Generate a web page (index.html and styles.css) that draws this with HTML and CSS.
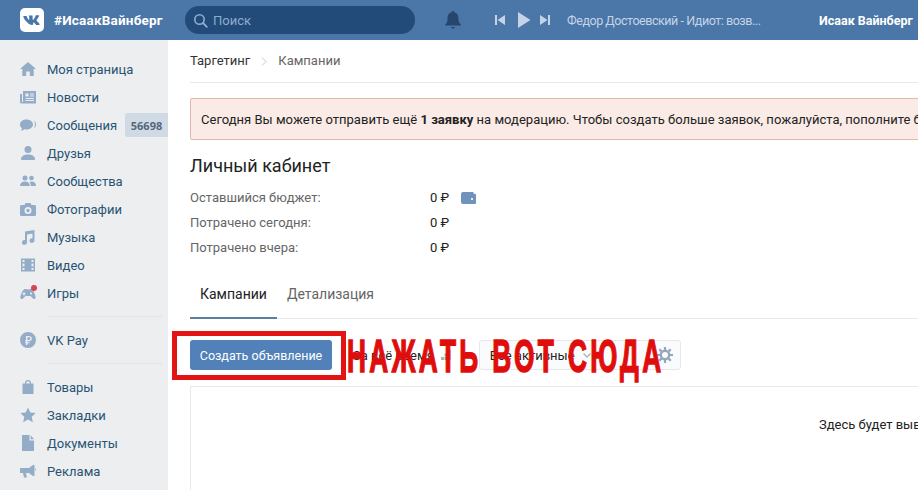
FILE: index.html
```html
<!DOCTYPE html>
<html lang="ru">
<head>
<meta charset="utf-8">
<title>Таргетинг</title>
<link rel="stylesheet" href="styles.css">
</head>
<body>
<header class="topbar">
  <div class="brand">
    <span class="logo"><svg width="24" height="24" viewBox="0 0 24 24"><rect width="24" height="24" rx="5" fill="#fff"/><path d="M3.600 7.900h2.600c.2 0 .4.100.5.400.7 2 1.700 3.600 2.200 3.600.2 0 .3-.1.3-.6V8.900c-.1-.8-.5-.8-.5-1.100 0-.1.100-.2.300-.2h3.200c.3 0 .4.100.4.400v3.300c0 .3.100.5.200.5.400 0 1-.6 1.800-1.900.5-.9.900-1.800 1.100-2.300.1-.2.200-.3.500-.3h2.500c.5 0 .6.200.5.500-.3 1-2.500 4.100-2.500 4.100-.2.300-.3.500 0 .8.200.3 1 1 1.500 1.600.7.800 1.200 1.500 1.400 2 .1.400-.1.600-.5.600h-2.500c-.5 0-.7-.3-1.500-1.200-.7-.7-1.200-1.200-1.500-1.200-.3 0-.4.100-.4.500v1.300c0 .4-.1.600-1 .6-2.100 0-4.100-1.200-5.700-3.400C4.600 12.100 3.300 9.500 3.300 8.300c0-.2.100-.4.300-.4z" fill="#4a76a8"/></svg></span>
    <span class="brand-name">#ИсаакВайнберг</span>
  </div>
  <div class="search">
    <svg class="search-icon" width="15" height="15" viewBox="0 0 15 15"><circle cx="6.500" cy="6.500" r="4.700" fill="none" stroke="#8fadcf" stroke-width="1.600"/><path d="M10 10l3.800 3.800" stroke="#8fadcf" stroke-width="1.800" stroke-linecap="round"/></svg>
    <span class="search-text">Поиск</span>
  </div>
  <svg class="bell" width="18" height="20" viewBox="0 0 18 20"><path d="M9 1c-.8 0-1.300.6-1.300 1.300C5 3 3.600 5.200 3.600 8c0 3-.6 5-2.100 6.200-.5.400-.4 1.300.4 1.300h14.400c.8 0 .9-.9.4-1.300C15 13 14.400 11 14.400 8c0-2.800-1.400-5-4.100-5.700C10.300 1.600 9.800 1 9 1z" fill="#24466f"/><path d="M7 17h4a2 1.500 0 0 1-4 0z" fill="#24466f"/></svg>
  <div class="player">
    <svg width="10" height="10" viewBox="0 0 10 10"><path d="M0 0h2v10H0zM10 0v10L2.500 5z" fill="#c5d3e6"/></svg>
    <svg class="play" width="13" height="16" viewBox="0 0 13 16"><path d="M0 0l12.500 8L0 16z" fill="#c5d3e6"/></svg>
    <svg width="10" height="10" viewBox="0 0 10 10"><path d="M0 0l7.500 5L0 10zM8 0h2v10H8z" fill="#c5d3e6"/></svg>
    <span class="track">Федор Достоевский - Идиот: возв...</span>
  </div>
  <span class="user">Исаак Вайнберг</span>
</header>

<div class="page">
  <nav class="sidebar">
    <a class="nav-item"><svg class="nav-icon" viewBox="0 0 16 16"><path d="M8 1l8 7h-2.300v7H9.800v-4.500H6.200V15H2.300V8H0z"/></svg><span>Моя страница</span></a>
    <a class="nav-item"><svg class="nav-icon" viewBox="0 0 16 16"><path fill-rule="evenodd" d="M3 2h13v12.500H1.500A1.500 1.500 0 0 1 0 13V5h2v8h1zM5.500 4.500v3h3v-3zm4.500 0v1h4v-1zm0 2v1h4v-1zM5.500 9v1H14V9zm0 2v1H14v-1z"/></svg><span>Новости</span></a>
    <a class="nav-item has-badge"><svg class="nav-icon" viewBox="0 0 16 16"><path d="M6.500 2.500C3 2.500 0 4.500 0 7.500c0 1.600.8 2.900 2 3.800-.2 1-.8 1.800-1.300 2.200 1.400 0 2.800-.6 3.700-1.300.7.200 1.400.3 2.100.3 3.600 0 6.500-2.200 6.500-5s-2.900-5-6.500-5z"/><path d="M14 3.500c1.300 1 2 2.400 2 4s-.8 3.200-2.300 4.200c.9-1.200 1.300-2.700 1.300-4.200s-.3-2.900-1-4z"/></svg><span>Сообщения</span><b class="badge">56698</b></a>
    <a class="nav-item"><svg class="nav-icon" viewBox="0 0 16 16"><circle cx="8" cy="4.500" r="3.500"/><path d="M2 15c-.7 0-1-.4-1-1 0-2.500 3-4.500 7-4.500s7 2 7 4.500c0 .6-.3 1-1 1z"/></svg><span>Друзья</span></a>
    <a class="nav-item"><svg class="nav-icon" viewBox="0 0 16 16"><circle cx="5" cy="5" r="2.500"/><circle cx="11.500" cy="5" r="2.300"/><path d="M0 13c0-2.800 2-4.500 5-4.500s4.800 1.700 4.800 4.500zM10.800 13c0-1.800-.5-3-1.400-3.900.6-.4 1.400-.6 2.200-.6 2.700 0 4.400 1.700 4.400 4.500z"/></svg><span>Сообщества</span></a>
    <a class="nav-item"><svg class="nav-icon" viewBox="0 0 16 16"><path fill-rule="evenodd" d="M5.500 2h5l1 2H14.500A1.500 1.500 0 0 1 16 5.500v8a1.500 1.500 0 0 1-1.500 1.500h-13A1.500 1.500 0 0 1 0 13.500v-8A1.500 1.500 0 0 1 1.500 4h3zM8 6a3.500 3.500 0 1 0 0 7 3.500 3.500 0 0 0 0-7zm0 1.800a1.700 1.700 0 1 1 0 3.400 1.700 1.700 0 0 1 0-3.400z"/></svg><span>Фотографии</span></a>
    <a class="nav-item"><svg class="nav-icon" viewBox="0 0 16 16"><path d="M5 2.500L14.500 1v10.500a2.500 2.300 0 1 1-2-2.200V4.500L7 5.400v8a2.500 2.300 0 1 1-2-2.200z"/></svg><span>Музыка</span></a>
    <a class="nav-item"><svg class="nav-icon" viewBox="0 0 16 16"><path fill-rule="evenodd" d="M1 1.500h14v13H1zM2.500 3v2h2V3zm0 3.500v3h2v-3zm0 4.500v2h2v-2zM11.500 3v2h2V3zm0 3.500v3h2v-3zm0 4.500v2h2v-2z"/></svg><span>Видео</span></a>
    <a class="nav-item games"><svg class="nav-icon" viewBox="0 0 16 16"><path fill-rule="evenodd" d="M4 4.500c1.300-.8 2.600-.2 4 .1 1.400-.3 2.700-.9 4-.1 2 1.200 4 7 3.600 8.500-.3 1.300-1.600 1.300-2.600.4L10.500 11h-5L3 13.400c-1 .9-2.300.9-2.600-.4C0 11.500 2 5.700 4 4.500zM3.500 7v1.200H2.400v1h1.100v1.200h1V9.200h1.100v-1H4.500V7zm7.500.5a1 1 0 1 0 0 2 1 1 0 0 0 0-2z"/></svg><i class="dot"></i><span>Игры</span></a>
    <div class="nav-sep"></div>
    <a class="nav-item"><svg class="nav-icon" viewBox="0 0 16 16"><path fill-rule="evenodd" d="M8 0a8 8 0 1 1 0 16A8 8 0 0 1 8 0zM6 4v4.300H5v1h1v1H5v1h1V13h1.400v-1.700h2.100v-1H7.400v-1h1.400c1.900 0 3-1 3-2.700S10.700 4 8.800 4zm1.400 1.200h1.400c1 0 1.600.5 1.600 1.400s-.6 1.500-1.600 1.500H7.400z"/></svg><span>VK Pay</span></a>
    <div class="nav-sep"></div>
    <a class="nav-item"><svg class="nav-icon" viewBox="0 0 16 16"><path fill-rule="evenodd" d="M5 4.500V4a3 3 0 0 1 6 0v.5h2.500V15H2.500V4.500zM6.200 4.500h3.600V4a1.800 1.800 0 0 0-3.600 0z"/></svg><span>Товары</span></a>
    <a class="nav-item"><svg class="nav-icon" viewBox="0 0 16 16"><path d="M8 .5l2.300 5 5.400.6-4 3.700 1.100 5.400L8 12.500l-4.800 2.700 1.100-5.400-4-3.700 5.400-.6z"/></svg><span>Закладки</span></a>
    <a class="nav-item"><svg class="nav-icon" viewBox="0 0 16 16"><path d="M2 0h7.500v5.500H14V16H2zM10.700.3L14 4.300h-3.300z"/></svg><span>Документы</span></a>
    <a class="nav-item"><svg class="nav-icon" viewBox="0 0 16 16"><path d="M0 5h9l4-3h1.500v11H13L9 10H6l.8 4.500H4L3 10H0zM15.500 5H16v3h-.5z"/></svg><span>Реклама</span></a>
  </nav>

  <main class="content">
    <div class="crumbs">
      <span class="crumb-first">Таргетинг</span>
      <svg class="crumb-sep" width="6" height="9" viewBox="0 0 6 9"><path d="M1 .5l4 4-4 4" fill="none" stroke="#c3c8ce" stroke-width="1"/></svg>
      <span class="crumb-last">Кампании</span>
    </div>
    <div class="notice"><span class="notice-text">Сегодня Вы можете отправить ещё <b>1 заявку</b> на модерацию. Чтобы создать больше заявок, пожалуйста, пополните бюджет.</span></div>
    <h1 class="title">Личный кабинет</h1>
    <div class="stat"><span class="stat-label">Оставшийся бюджет:</span><span class="stat-value">0 ₽</span><svg class="wallet" width="15" height="12" viewBox="0 0 15 12"><path fill-rule="evenodd" d="M2 0h10.500v1.800H14a1 1 0 0 1 1 1V11a1 1 0 0 1-1 1H2a2 2 0 0 1-2-2V2a2 2 0 0 1 2-2zm9 6a1 1 0 1 0 0 2.200A1 1 0 0 0 11 6z" fill="#6f93bb"/></svg></div>
    <div class="stat"><span class="stat-label">Потрачено сегодня:</span><span class="stat-value">0 ₽</span></div>
    <div class="stat"><span class="stat-label">Потрачено вчера:</span><span class="stat-value">0 ₽</span></div>
    <div class="tabs">
      <span class="tab tab-active">Кампании</span>
      <span class="tab">Детализация</span>
    </div>
    <div class="toolbar">
      <button class="create">Создать объявление</button>
      <span class="period">За всё время</span>
      <svg class="grid-icon" width="10" height="10" viewBox="0 0 10 10"><path d="M7 0h3v3H7zM3.500 3.500h3v3h-3zM7 3.500h3v3H7zM0 7h3v3H0zM3.500 7h3v3h-3zM7 7h3v3H7z" fill="#a5b4c5"/></svg>
      <div class="filter">
        <span class="filter-text">Все активные</span>
        <svg class="caret" width="8" height="5" viewBox="0 0 8 5"><path d="M.5.500L4 4 7.500.500" fill="none" stroke="#a5b4c5" stroke-width="1.300"/></svg>
        <span class="filter-spacer"></span>
        <svg class="gear" width="16" height="16" viewBox="0 0 16 16"><circle cx="8" cy="8" r="4.200" fill="none" stroke="#93a6ba" stroke-width="2.400"/><path d="M8 0v3M8 13v3M0 8h3M13 8h3M2.300 2.300l2.100 2.100M11.600 11.600l2.100 2.100M13.700 2.300l-2.100 2.100M4.400 11.600l-2.100 2.100" stroke="#93a6ba" stroke-width="2.200"/></svg>
      </div>
    </div>
    <section class="panel"><p class="panel-text">Здесь будет выводиться список Ваших кампаний.</p></section>
    <div class="annot-box"></div>
    <div class="annot-text">НАЖАТЬ ВОТ СЮДА</div>
  </main>
</div>
</body>
</html>
```

FILE: styles.css
```css
* { box-sizing: border-box; }
html, body { margin: 0; height: 490px; overflow: hidden; }
body { font-family: Roboto, "Noto Sans", sans-serif; font-size: 13px; color: #222; background: #fff; }

.topbar { height: 40px; background: #4a76a8; display: flex; align-items: center; padding-left: 20px; white-space: nowrap; overflow: hidden; }
.brand { display: flex; align-items: center; gap: 10px; width: 165px; }
.logo { display: flex; width: 24px; height: 24px; }
.brand-name { color: #fff; font-weight: 700; font-size: 13.500px; letter-spacing: .2px; }
.search { width: 230px; height: 28px; border-radius: 14px; background: #224b7a; display: flex; align-items: center; padding-left: 8px; gap: 5px; }
.search-text { color: #8fadcf; font-size: 13px; }
.bell { margin-left: 29px; flex: none; }
.player { display: flex; align-items: center; margin-left: 33px; width: 324px; }
.player svg { flex: none; }
.play { margin: 0 9px 0 13px; }
.track { color: #c5d3e6; font-size: 12.500px; margin-left: 17px; letter-spacing: -.45px; }
.user { color: #fff; font-weight: 700; font-size: 12.500px; }

.page { display: flex; height: 450px; }
.sidebar { width: 168px; flex: none; background: #edeef0; padding-top: 15px; }
.nav-item { display: flex; align-items: center; height: 28px; padding-left: 20px; color: #285473; font-size: 13px; position: relative; }
.nav-icon { width: 16px; height: 16px; fill: #93acc8; margin-right: 11px; flex: none; }
.badge { margin-left: auto; width: 43px; height: 24px; background: #d0dae5; border-radius: 2px 0 0 2px; color: #55677d; font-size: 11px; font-weight: 700; display: flex; align-items: center; justify-content: center; font-family: "Open Sans", Roboto, sans-serif; }
.dot { position: absolute; left: 31px; top: 6px; width: 6px; height: 6px; border-radius: 50%; background: #d9434e; }
.nav-sep { height: 1px; background: #e1e3e6; margin: 9px 6px 9px 47px; }

.content { flex: 1; min-width: 0; padding-left: 22px; position: relative; white-space: nowrap; overflow: hidden; }
.crumbs { height: 43px; border-bottom: 1px solid #e7e8ec; display: flex; align-items: center; padding-bottom: 2px; }
.crumb-first { color: #333; }
.crumb-sep { margin: 3px 11px 0 11px; }
.crumb-last { color: #656565; }
.notice { margin-top: 15px; width: 760px; height: 42px; background: #faebe6; border: 1px solid #e0b8ad; border-radius: 2px; padding-left: 10px; display: flex; align-items: center; color: #222; letter-spacing: .015px; }
.notice b { font-weight: 700; }
.title { margin: 15px 0 8px; font-size: 18px; font-weight: 400; line-height: 22px; color: #222; }
.stat { display: flex; align-items: center; height: 25px; }
.stat-label { width: 240px; color: #656565; }
.stat-value { color: #222; }
.wallet { margin-left: 12px; }
.tabs { display: flex; height: 49px; margin-top: 10px; border-bottom: 1px solid #e7e8ec; }
.tab { padding: 16px 10px 0; color: #656565; font-size: 14px; height: 49px; }
.tab-active { color: #222; border-bottom: 2px solid #5b7f9e; }
.toolbar { display: flex; align-items: center; height: 32px; margin-top: 20px; }
.create { height: 30px; width: 142px; background: #5181b8; border: 0; border-radius: 3px; color: #fff; font: 12.500px Roboto, sans-serif; padding: 0; }
.period { margin-left: 21px; color: #222; }
.grid-icon { margin-left: 7px; }
.filter { margin-left: 28px; width: 202px; height: 30px; border: 1px solid #e7e8ec; border-radius: 3px; background: #fafbfc; display: flex; align-items: center; padding-left: 10px; }
.filter-text { color: #222; }
.caret { margin-left: 8px; }
.filter-spacer { flex: 1; }
.gear { margin-right: 7px; }
.panel { margin-top: 15px; height: 140px; width: 760px; border: 1px solid #e7e8ec; }
.panel-text { margin: 30px 0 0 628px; color: #222; }

.annot-box { position: absolute; left: 4px; top: 291px; width: 174px; height: 49px; border: 5px solid #e31414; }
.annot-text { position: absolute; left: 179px; top: 292px; font-family: "Liberation Sans", sans-serif; font-weight: 700; font-size: 46px; line-height: 48px; color: #e00d0d; letter-spacing: 6px; -webkit-text-stroke: 1.500px #e00d0d; transform: scaleX(.57); transform-origin: left center; }
```
